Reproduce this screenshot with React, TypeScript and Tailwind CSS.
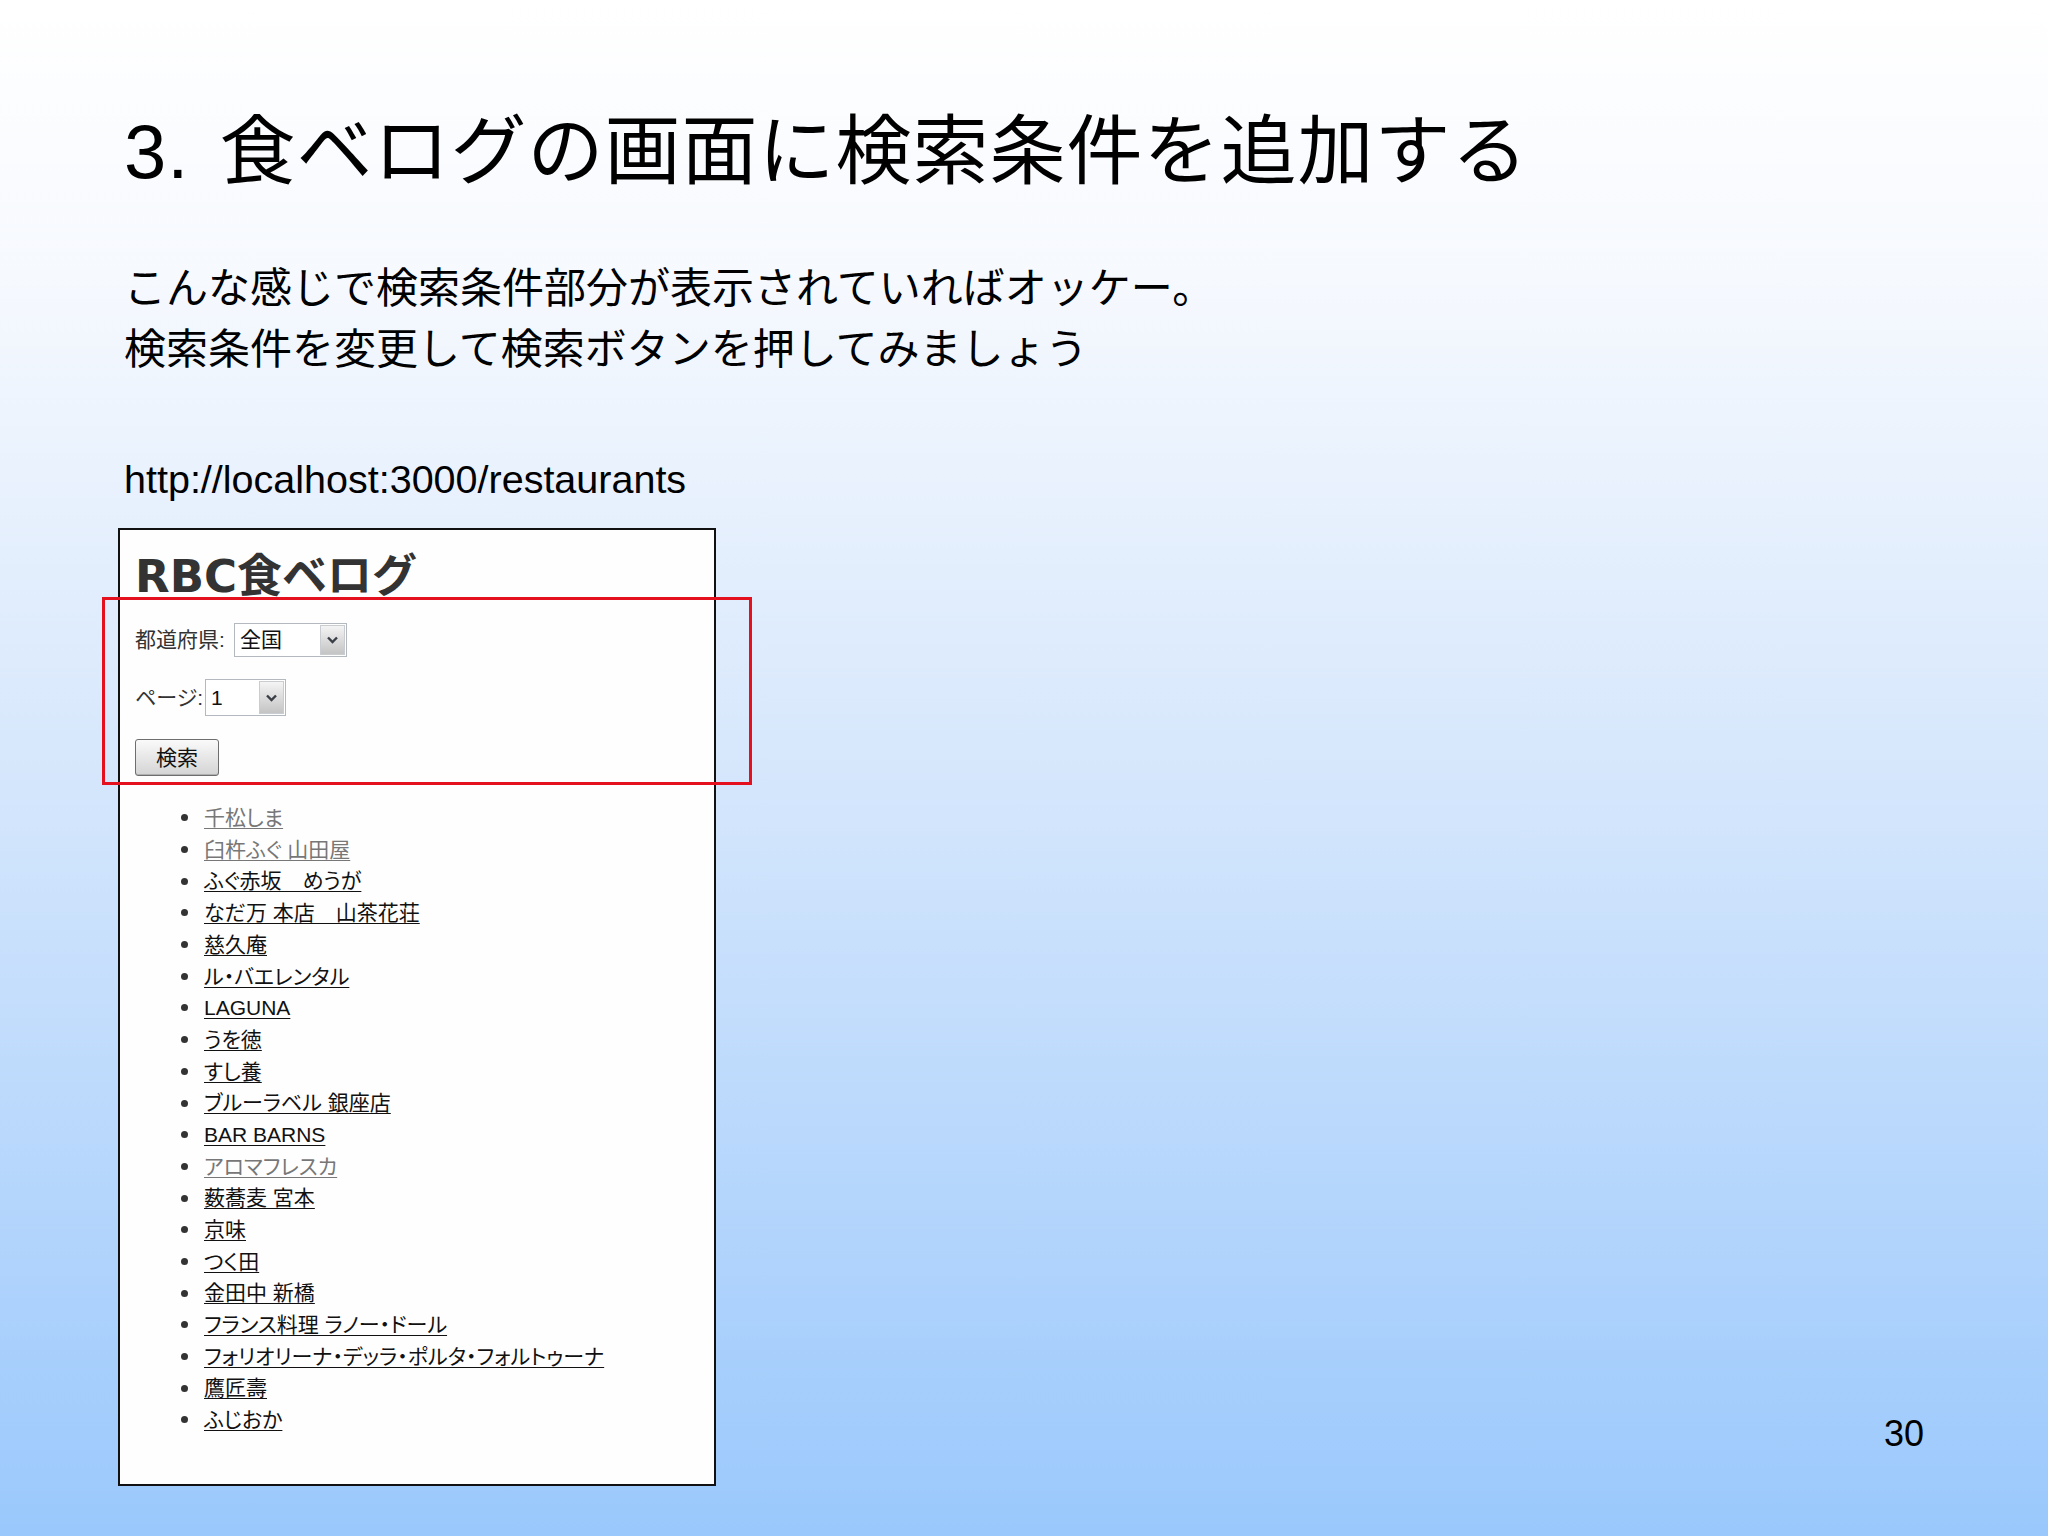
import type { ReactNode } from "react";

const jp = "font-['Liberation_Sans','Noto_Sans_CJK_JP',sans-serif]";

type Shop = { name: string; visited?: boolean };

const shops: Shop[] = [
  { name: "千松しま", visited: true },
  { name: "臼杵ふぐ 山田屋", visited: true },
  { name: "ふぐ赤坂　めうが" },
  { name: "なだ万 本店　山茶花荘" },
  { name: "慈久庵" },
  { name: "ル・バエレンタル" },
  { name: "LAGUNA" },
  { name: "うを徳" },
  { name: "すし養" },
  { name: "ブルーラベル 銀座店" },
  { name: "BAR BARNS" },
  { name: "アロマフレスカ", visited: true },
  { name: "薮蕎麦 宮本" },
  { name: "京味" },
  { name: "つく田" },
  { name: "金田中 新橋" },
  { name: "フランス料理 ラノー・ドール" },
  { name: "フォリオリーナ・デッラ・ポルタ・フォルトゥーナ" },
  { name: "鷹匠壽" },
  { name: "ふじおか" },
];

// old-school Windows dropdown, drawn by hand so it looks the same everywhere
function FakeSelect({ width, height, children }: { width: string; height: string; children: ReactNode }) {
  return (
    <div className={`flex items-stretch border border-[#b4b9bf] bg-white ${width} ${height}`}>
      <div className="flex flex-1 items-center pl-[5px] text-[21px] text-[#111]">{children}</div>
      <div className="m-[1px] flex w-[25px] items-center justify-center border border-[#c9ccd0] bg-[linear-gradient(180deg,#f4f4f4,#c4c4c4)]">
        <svg width="13" height="10" viewBox="0 0 13 10" aria-hidden="true">
          <polyline points="2,2.5 6.5,7 11,2.5" fill="none" stroke="#3a3f47" strokeWidth="2.4" />
        </svg>
      </div>
    </div>
  );
}

export default function App() {
  return (
    <div
      className={`relative flex h-[1536px] w-[2048px] flex-col overflow-hidden bg-[linear-gradient(180deg,#ffffff_0%,#f6f9fe_18%,#d6e7fc_50%,#9ac8fc_100%)] pl-[124px] pr-[124px] pt-[104px] text-black ${jp}`}
    >
      <h1 className="h-[96px] whitespace-nowrap text-[76px] font-normal leading-[96px] tracking-[1px]">
        <span className="mr-[30px]">3.</span>食ベログの画面に検索条件を追加する
      </h1>

      <div className="mt-[58px] text-[42px] leading-[61px]">
        <p>こんな感じで検索条件部分が表示されていればオッケー。</p>
        <p>検索条件を変更して検索ボタンを押してみましょう</p>
      </div>

      <p className="mt-[75px] text-[39.5px] leading-[48px]">http://localhost:3000/restaurants</p>

      <div className="mt-[25px] flex items-end justify-between">
        <div className="relative ml-[-6px] h-[958px] w-[598px] border-2 border-[#111] bg-[#fefefe] pl-[15px] pt-[22px]">
          <h2 className="whitespace-nowrap font-['DejaVu_Sans','Noto_Sans_CJK_JP',sans-serif] text-[45px] font-bold leading-[50px] text-[#333]">
            RBC食ベログ
          </h2>

          <div className="mt-[21px] flex h-[34px] items-center gap-[3px] text-[21px] text-[#333]">
            <span className="w-[96px] whitespace-nowrap">都道府県:</span>
            <FakeSelect width="w-[113px]" height="h-[34px]">全国</FakeSelect>
          </div>

          <div className="mt-[22px] flex h-[37px] items-center gap-[2px] text-[21px] text-[#333]">
            <span className="w-[68px] whitespace-nowrap [font-feature-settings:'palt']">ページ:</span>
            <FakeSelect width="w-[81px]" height="h-[37px]">1</FakeSelect>
          </div>

          <button
            type="button"
            className="mt-[23px] flex h-[37px] w-[84px] items-center justify-center rounded-[3px] border border-[#6e6e6e] bg-[linear-gradient(180deg,#fafafa,#d4d4d4)] text-[21px] text-[#111] shadow-[inset_0_-1px_0_#b0b0b0]"
          >
            検索
          </button>

          <ul className="mt-[26px] text-[21px] [font-feature-settings:'palt']">
            {shops.map((shop) => (
              <li key={shop.name} className="flex h-[31.7px] items-center">
                <span className="ml-[46px] mr-[16px] h-[7px] w-[7px] rounded-full bg-[#333]" />
                <a
                  href="#"
                  className={`whitespace-nowrap underline decoration-1 underline-offset-[3px] ${shop.visited ? "text-[#777]" : "text-[#111]"}`}
                >
                  {shop.name}
                </a>
              </li>
            ))}
          </ul>

          <div className="pointer-events-none absolute left-[-18px] top-[67px] h-[188px] w-[650px] border-[3px] border-[#e5101d]" />
        </div>

        <span className="mb-[32px] font-['Liberation_Sans',sans-serif] text-[36px] leading-[40px]">30</span>
      </div>
    </div>
  );
}
